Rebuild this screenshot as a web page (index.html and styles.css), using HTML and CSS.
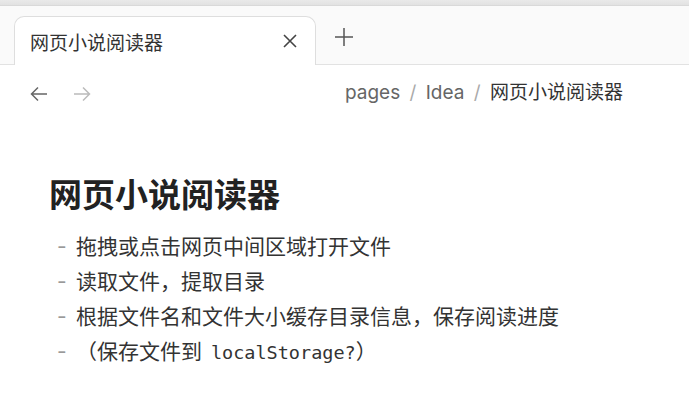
FILE: index.html
```html
<!DOCTYPE html>
<html lang="zh-CN">
<head>
    <meta charset="UTF-8">
    <meta name="viewport" content="width=device-width, initial-scale=1.0">
    <title>网页小说阅读器</title>
    <link rel="stylesheet" href="styles.css">
</head>
<body>
    <div class="top-strip"></div>
    <div class="tab-bar">
        <div class="tab">
            <span class="tab-title">网页小说阅读器</span>
            <svg class="tab-close" width="16" height="16" viewBox="0 0 16 16">
                <path d="M2 2 L14 14 M14 2 L2 14" stroke="#444" stroke-width="1.6" fill="none"/>
            </svg>
        </div>
        <svg class="tab-add" width="20" height="20" viewBox="0 0 20 20">
            <path d="M10 1 V19 M1 10 H19" stroke="#555" stroke-width="1.5" fill="none"/>
        </svg>
    </div>

    <div class="nav-bar">
        <div class="nav-arrows">
            <svg width="20" height="20" viewBox="0 0 20 20">
                <path d="M18 10 H3 M9 3.5 L2.5 10 L9 16.5" stroke="#666" stroke-width="1.5" fill="none"/>
            </svg>
            <svg width="20" height="20" viewBox="0 0 20 20">
                <path d="M2 10 H17 M11 3.5 L17.5 10 L11 16.5" stroke="#bbb" stroke-width="1.5" fill="none"/>
            </svg>
        </div>
        <div class="crumbs">
            pages <span class="sep">/</span> Idea <span class="sep">/</span> <span class="current">网页小说阅读器</span>
        </div>
    </div>

    <div class="page">
        <h1>网页小说阅读器</h1>
        <ul class="notes">
            <li>拖拽或点击网页中间区域打开文件</li>
            <li>读取文件，提取目录</li>
            <li>根据文件名和文件大小缓存目录信息，保存阅读进度</li>
            <li>（保存文件到 <span class="code">localStorage?</span>）</li>
        </ul>
    </div>
</body>
</html>
```

FILE: styles.css
```css
body {
    margin: 0;
    font-family: Inter, "Noto Sans CJK SC", sans-serif;
    background-color: white;
    color: #333;
}
.top-strip {
    height: 5px;
    background: linear-gradient(#e9e9e9, #e2e2e2);
    border-bottom: 1px solid #d9d9d9;
}
.tab-bar {
    height: 59px;
    background-color: #fafafa;
    border-bottom: 1px solid #e2e2e2;
    display: flex;
    align-items: flex-end;
    padding-left: 14px;
    box-sizing: border-box;
}
.tab {
    width: 302px;
    height: 49px;
    box-sizing: border-box;
    background-color: white;
    border: 1px solid #dedede;
    border-bottom: none;
    border-radius: 10px 10px 0 0;
    margin-bottom: -1px;
    display: flex;
    align-items: center;
    justify-content: space-between;
    padding: 0 17px 0 15px;
}
.tab-title {
    font-size: 19px;
    color: #333;
}
.tab-add {
    margin: 0 0 17px 18px;
}
.nav-bar {
    height: 56px;
    display: flex;
    align-items: center;
    justify-content: space-between;
    padding: 0 66px 2px 29px;
}
.nav-arrows {
    display: flex;
    gap: 23px;
    padding-top: 2px;
}
.nav-arrows svg {
    display: block;
}
.crumbs {
    font-size: 19px;
    line-height: 24px;
    color: #666;
    word-spacing: 4px;
}
.crumbs .sep {
    color: #aaa;
}
.crumbs .current {
    color: #333;
}
.page {
    padding: 50px 49px 0;
}
h1 {
    margin: 0 0 12px;
    font-size: 33px;
    font-weight: bold;
    color: #222;
    line-height: 44px;
}
.notes {
    list-style: none;
    margin: 0;
    padding: 0 0 0 8px;
}
.notes li {
    font-size: 21px;
    line-height: 35px;
    color: #333;
}
.notes li::before {
    content: "-";
    color: #999;
    display: inline-block;
    width: 19px;
}
.code {
    font-family: "DejaVu Sans Mono", monospace;
    font-size: 18.5px;
    padding-left: 3px;
}
```
